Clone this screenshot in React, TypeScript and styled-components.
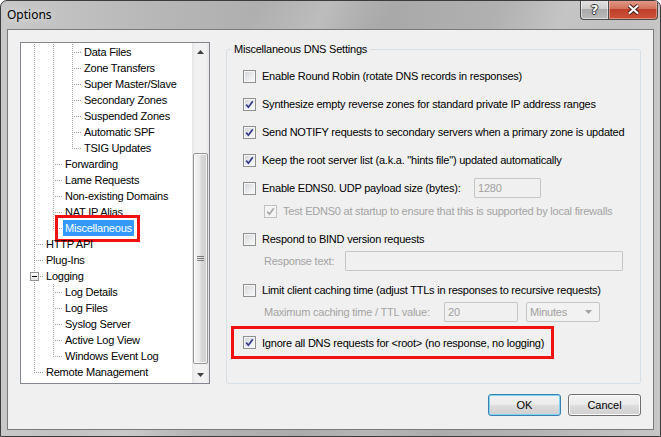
import React, { FC } from 'react'
import styled, { createGlobalStyle, css } from 'styled-components'

type CellKind = 'pass' | 'blank' | 'tee' | 'last'

interface TreeItem {
  label: string
  guides: boolean[]
  conn: 'tee' | 'last'
  expanded?: boolean
  selected?: boolean
}

const treeItems: TreeItem[] = [
  { label: 'Data Files', guides: [true, true], conn: 'tee' },
  { label: 'Zone Transfers', guides: [true, true], conn: 'tee' },
  { label: 'Super Master/Slave', guides: [true, true], conn: 'tee' },
  { label: 'Secondary Zones', guides: [true, true], conn: 'tee' },
  { label: 'Suspended Zones', guides: [true, true], conn: 'tee' },
  { label: 'Automatic SPF', guides: [true, true], conn: 'tee' },
  { label: 'TSIG Updates', guides: [true, true], conn: 'last' },
  { label: 'Forwarding', guides: [true], conn: 'tee' },
  { label: 'Lame Requests', guides: [true], conn: 'tee' },
  { label: 'Non-existing Domains', guides: [true], conn: 'tee' },
  { label: 'NAT IP Alias', guides: [true], conn: 'tee' },
  { label: 'Miscellaneous', guides: [true], conn: 'last', selected: true },
  { label: 'HTTP API', guides: [], conn: 'tee' },
  { label: 'Plug-Ins', guides: [], conn: 'tee' },
  { label: 'Logging', guides: [], conn: 'tee', expanded: true },
  { label: 'Log Details', guides: [true], conn: 'tee' },
  { label: 'Log Files', guides: [true], conn: 'tee' },
  { label: 'Syslog Server', guides: [true], conn: 'tee' },
  { label: 'Active Log View', guides: [true], conn: 'tee' },
  { label: 'Windows Event Log', guides: [true], conn: 'last' },
  { label: 'Remote Management', guides: [], conn: 'last' },
]

const CheckMark: FC<{ disabled?: boolean }> = ({ disabled }) => (
  <svg width="9" height="9" viewBox="0 0 9 9">
    <path
      d="M1.2 4.6 L3.4 7.2 L7.8 1.2"
      fill="none"
      stroke={disabled ? '#a9a9a9' : '#363a8c'}
      strokeWidth="1.7"
    />
  </svg>
)

const CheckBox: FC<{ checked?: boolean; disabled?: boolean }> = ({ checked, disabled }) => (
  <Box $disabled={disabled}>{checked && <CheckMark disabled={disabled} />}</Box>
)

const App: FC = () => {
  return (
    <Window>
      <GlobalStyle />
      <TitleBar>
        <Title>Options</Title>
        <CaptionButtons>
          <HelpButton>?</HelpButton>
          <CloseButton>
            <svg width="13" height="11" viewBox="0 0 13 11">
              <path d="M2 1.5 L11 9.5 M11 1.5 L2 9.5" stroke="#3b1a14" strokeWidth="4" />
              <path d="M2 1.5 L11 9.5 M11 1.5 L2 9.5" stroke="#ffffff" strokeWidth="2.2" />
            </svg>
          </CloseButton>
        </CaptionButtons>
      </TitleBar>
      <FrameBody>
        <Client>
          <Panels>
            <Tree>
              <TreeList>
                {treeItems.map((item) => (
                  <TreeRow key={item.label}>
                    {item.guides.map((g, i) => (
                      <Cell key={i} $kind={g ? 'pass' : 'blank'} />
                    ))}
                    <Cell $kind={item.conn}>{item.expanded && <Expander />}</Cell>
                    <NodeLabel $selected={item.selected}>{item.label}</NodeLabel>
                  </TreeRow>
                ))}
              </TreeList>
              <ScrollBar>
                <ArrowButton>
                  <svg width="7" height="4" viewBox="0 0 7 4">
                    <path d="M0 4 L3.5 0 L7 4 Z" fill="#404040" />
                  </svg>
                </ArrowButton>
                <Track>
                  <Thumb>
                    <svg width="7" height="6" viewBox="0 0 7 6">
                      <path d="M0 0.5 H7 M0 2.5 H7 M0 4.5 H7" stroke="#7b7b7b" strokeWidth="1" />
                    </svg>
                  </Thumb>
                </Track>
                <ArrowButton>
                  <svg width="7" height="4" viewBox="0 0 7 4">
                    <path d="M0 0 L3.5 4 L7 0 Z" fill="#404040" />
                  </svg>
                </ArrowButton>
              </ScrollBar>
            </Tree>

            <Group>
              <Legend>Miscellaneous DNS Settings</Legend>
              <Row>
                <CheckBox />
                <Label>Enable Round Robin (rotate DNS records in responses)</Label>
              </Row>
              <Row $mt={8}>
                <CheckBox checked />
                <Label>Synthesize empty reverse zones for standard private IP address ranges</Label>
              </Row>
              <Row $mt={8}>
                <CheckBox checked />
                <Label>Send NOTIFY requests to secondary servers when a primary zone is updated</Label>
              </Row>
              <Row $mt={8}>
                <CheckBox checked />
                <Label>Keep the root server list (a.k.a. "hints file") updated automatically</Label>
              </Row>
              <Row $mt={8}>
                <CheckBox />
                <Label $w={212}>Enable EDNS0. UDP payload size (bytes):</Label>
                <Field $w={67} disabled defaultValue="1280" />
              </Row>
              <Row $mt={3} $indent={33}>
                <CheckBox checked disabled />
                <Label $disabled>Test EDNS0 at startup to ensure that this is supported by local firewalls</Label>
              </Row>
              <Row $mt={8}>
                <CheckBox />
                <Label>Respond to BIND version requests</Label>
              </Row>
              <Row $mt={2} $indent={33}>
                <FieldLabel $w={81}>Response text:</FieldLabel>
                <Field $w={278} disabled defaultValue="" />
              </Row>
              <Row $mt={9}>
                <CheckBox />
                <Label>Limit client caching time (adjust TTLs in responses to recursive requests)</Label>
              </Row>
              <Row $mt={2} $indent={33}>
                <FieldLabel $w={180}>Maximum caching time / TTL value:</FieldLabel>
                <Field $w={74} disabled defaultValue="20" />
                <Select>
                  <span>Minutes</span>
                  <svg width="7" height="4" viewBox="0 0 7 4">
                    <path d="M0 0 L3.5 4 L7 0 Z" fill="#a3a3a3" />
                  </svg>
                </Select>
              </Row>
              <Highlight>
                <CheckBox checked />
                <Label>Ignore all DNS requests for &lt;root&gt; (no response, no logging)</Label>
              </Highlight>
            </Group>
          </Panels>

          <ButtonBar>
            <DialogButton $default>OK</DialogButton>
            <DialogButton>Cancel</DialogButton>
          </ButtonBar>
        </Client>
      </FrameBody>
    </Window>
  )
}

export default App

const GlobalStyle = createGlobalStyle`
  html, body {
    margin: 0;
    padding: 0;
    background: #ffffff;
  }
  body {
    font-family: 'Liberation Sans', Arial, sans-serif;
    font-size: 11px;
    letter-spacing: -0.22px;
    color: #000;
  }
`

const Window = styled.div`
  width: 661px;
  height: 437px;
  box-sizing: border-box;
  display: flex;
  flex-direction: column;
  border: 1px solid #3c3c3c;
  border-radius: 7px 7px 0 0;
  overflow: hidden;
  background:
    linear-gradient(115deg, transparent 30%, rgba(255, 255, 255, 0.22) 38%, transparent 46%),
    linear-gradient(115deg, transparent 58%, rgba(255, 255, 255, 0.18) 66%, transparent 74%),
    linear-gradient(to right, #c8c8c8 0%, #b6b6b6 25%, #a7a7a7 55%, #b3b3b3 80%, #c6c6c6 100%);
`

const TitleBar = styled.div`
  height: 28px;
  display: flex;
  justify-content: space-between;
  align-items: flex-start;
`

const Title = styled.span`
  margin: 6px 0 0 6px;
  font-family: 'Noto Sans', 'Open Sans', sans-serif;
  font-size: 12px;
  line-height: 16px;
  letter-spacing: 0;
  color: #000;
  text-shadow: 0 0 8px rgba(255, 255, 255, 0.9);
`

const CaptionButtons = styled.div`
  display: flex;
  margin-right: 2px;
  margin-top: -1px;
`

const captionBase = css`
  height: 20px;
  box-sizing: border-box;
  display: flex;
  align-items: center;
  justify-content: center;
  border: 1px solid #4b4b4b;
  border-top: none;
`

const HelpButton = styled.div`
  ${captionBase}
  width: 28px;
  border-right: none;
  border-radius: 0 0 0 4px;
  background: linear-gradient(#e3e3e3 0%, #cfcfcf 45%, #ababab 50%, #b9b9b9 100%);
  box-shadow: inset 0 0 0 1px rgba(255, 255, 255, 0.5);
  font-family: 'DejaVu Sans', sans-serif;
  font-weight: bold;
  font-size: 13px;
  letter-spacing: 0;
  color: #fff;
  text-shadow: -1px 0 #333, 1px 0 #333, 0 -1px #333, 0 1px #333;
`

const CloseButton = styled.div`
  ${captionBase}
  width: 50px;
  border-radius: 0 0 4px 0;
  background: linear-gradient(#e39c8a 0%, #d3735d 45%, #c03f28 50%, #cc5238 100%);
  box-shadow: inset 0 0 0 1px rgba(255, 210, 200, 0.45);
`

const FrameBody = styled.div`
  flex: 1;
  display: flex;
  padding: 0 6px 6px;
`

const Client = styled.div`
  flex: 1;
  display: flex;
  flex-direction: column;
  border: 1px solid #7a7a7a;
  background: #f0f0f0;
  padding: 12px 12px 13px;
`

const Panels = styled.div`
  display: flex;
  gap: 16px;
  height: 342px;
`

const Tree = styled.div`
  width: 190px;
  box-sizing: border-box;
  border: 1px solid #828790;
  background: #fff;
  display: flex;
`

const TreeList = styled.div`
  flex: 1;
  padding: 1px 0 0 4px;
  overflow: hidden;
`

const TreeRow = styled.div`
  display: flex;
  height: 16px;
  white-space: nowrap;
`

const dotV = 'repeating-linear-gradient(to bottom, #a0a0a0 0 1px, transparent 1px 2px)'
const dotH = 'repeating-linear-gradient(to right, #a0a0a0 0 1px, transparent 1px 2px)'

const Cell = styled.span<{ $kind: CellKind }>`
  width: 19px;
  flex-shrink: 0;
  display: flex;
  align-items: center;
  background-repeat: no-repeat;
  ${({ $kind }) =>
    $kind === 'pass' &&
    css`
      background-image: ${dotV};
      background-size: 1px 16px;
      background-position: 9px 0;
    `}
  ${({ $kind }) =>
    $kind === 'tee' &&
    css`
      background-image: ${dotV}, ${dotH};
      background-size: 1px 16px, 8px 1px;
      background-position: 9px 0, 11px 8px;
    `}
  ${({ $kind }) =>
    $kind === 'last' &&
    css`
      background-image: ${dotV}, ${dotH};
      background-size: 1px 9px, 8px 1px;
      background-position: 9px 0, 11px 8px;
    `}
`

const Expander = styled.span`
  width: 9px;
  height: 9px;
  box-sizing: border-box;
  margin: 0 0 0 5px;
  border: 1px solid #919191;
  background: linear-gradient(#000, #000) center / 5px 1px no-repeat,
    linear-gradient(#ffffff, #e4e4e4);
`

const NodeLabel = styled.span<{ $selected?: boolean }>`
  position: relative;
  padding: 0 2px;
  line-height: 16px;
  ${({ $selected }) =>
    $selected &&
    css`
      background: #3399ff;
      color: #fff;
      &::after {
        content: '';
        position: absolute;
        inset: -5px -6px -6px -8px;
        border: 3px solid #f21010;
      }
    `}
`

const ScrollBar = styled.div`
  width: 17px;
  display: flex;
  flex-direction: column;
  background: linear-gradient(to right, #e4e4e4 0, #f1f1f1 3px, #f1f1f1 14px, #e4e4e4 17px);
`

const ArrowButton = styled.div`
  height: 17px;
  display: flex;
  align-items: center;
  justify-content: center;
`

const Track = styled.div`
  flex: 1;
  display: flex;
  flex-direction: column;
`

const Thumb = styled.div`
  margin: 93px 1px 0;
  height: 211px;
  box-sizing: border-box;
  border: 1px solid #969696;
  border-radius: 2px;
  background: linear-gradient(to right, #f5f5f5 0%, #e9e9e9 45%, #d8d8d8 55%, #cfcfcf 100%);
  box-shadow: inset 0 0 0 1px rgba(255, 255, 255, 0.7);
  display: flex;
  align-items: center;
  justify-content: center;
`

const Group = styled.fieldset`
  width: 415px;
  box-sizing: border-box;
  margin: 0;
  min-width: 0;
  padding: 10px 4px 0;
  border: 1px solid #d5dfe5;
  border-radius: 3px;
  display: flex;
  flex-direction: column;
`

const Legend = styled.legend`
  padding: 0 3px;
  line-height: 14px;
  color: #000;
`

const Row = styled.div<{ $mt?: number; $indent?: number }>`
  display: flex;
  align-items: center;
  height: 20px;
  margin-top: ${({ $mt }) => $mt ?? 0}px;
  padding-left: ${({ $indent }) => $indent ?? 12}px;
  white-space: nowrap;
`

const Box = styled.span<{ $disabled?: boolean }>`
  width: 13px;
  height: 13px;
  box-sizing: border-box;
  flex-shrink: 0;
  display: flex;
  align-items: center;
  justify-content: center;
  border: 1px solid ${({ $disabled }) => ($disabled ? '#c0c0c0' : '#8e8f8f')};
  background: ${({ $disabled }) =>
    $disabled ? '#f4f4f4' : 'linear-gradient(135deg, #d0d2d5 0%, #e8eaec 50%, #fafafa 100%)'};
  box-shadow: inset 0 0 0 1px #f6f6f6;
`

const Label = styled.span<{ $disabled?: boolean; $w?: number }>`
  margin-left: 6px;
  color: ${({ $disabled }) => ($disabled ? '#a3a3a3' : '#000')};
  ${({ $w }) => $w && `width: ${$w}px; flex-shrink: 0;`}
`

const FieldLabel = styled.span<{ $w: number }>`
  width: ${({ $w }) => $w}px;
  flex-shrink: 0;
  color: #a3a3a3;
`

const Field = styled.input<{ $w: number }>`
  width: ${({ $w }) => $w}px;
  height: 20px;
  box-sizing: border-box;
  margin: 0;
  padding: 0 3px;
  border: 1px solid #c6c6c6;
  border-radius: 1px;
  background: #f0f0f0;
  font-family: 'Liberation Sans', Arial, sans-serif;
  font-size: 11px;
  letter-spacing: -0.22px;
  color: #a0a0a0;
  -webkit-text-fill-color: #a0a0a0;
  opacity: 1;
`

const Select = styled.div`
  width: 74px;
  height: 20px;
  box-sizing: border-box;
  margin-left: 8px;
  padding: 0 7px 0 3px;
  display: flex;
  align-items: center;
  justify-content: space-between;
  border: 1px solid #c6c6c6;
  border-radius: 2px;
  background: #f2f2f2;
  color: #a0a0a0;
`

const Highlight = styled.div`
  align-self: flex-start;
  width: 323px;
  height: 33px;
  box-sizing: border-box;
  margin-top: 4px;
  padding-left: 9px;
  display: flex;
  align-items: center;
  border: 3px solid #f21010;
  white-space: nowrap;
`

const ButtonBar = styled.div`
  display: flex;
  justify-content: flex-end;
  gap: 7px;
  margin-top: 10px;
`

const DialogButton = styled.button<{ $default?: boolean }>`
  width: 73px;
  height: 22px;
  box-sizing: border-box;
  margin: 0;
  padding: 0;
  border-radius: 3px;
  font-family: 'Liberation Sans', Arial, sans-serif;
  font-size: 11px;
  color: #000;
  border: 1px solid ${({ $default }) => ($default ? '#3c7fb1' : '#707070')};
  background: linear-gradient(#f3f3f3 0%, #ebebeb 50%, #dddddd 51%, #d0d0d0 100%);
  box-shadow: inset 0 0 0 1px ${({ $default }) => ($default ? '#7fd4f4' : '#fcfcfc')};
`
